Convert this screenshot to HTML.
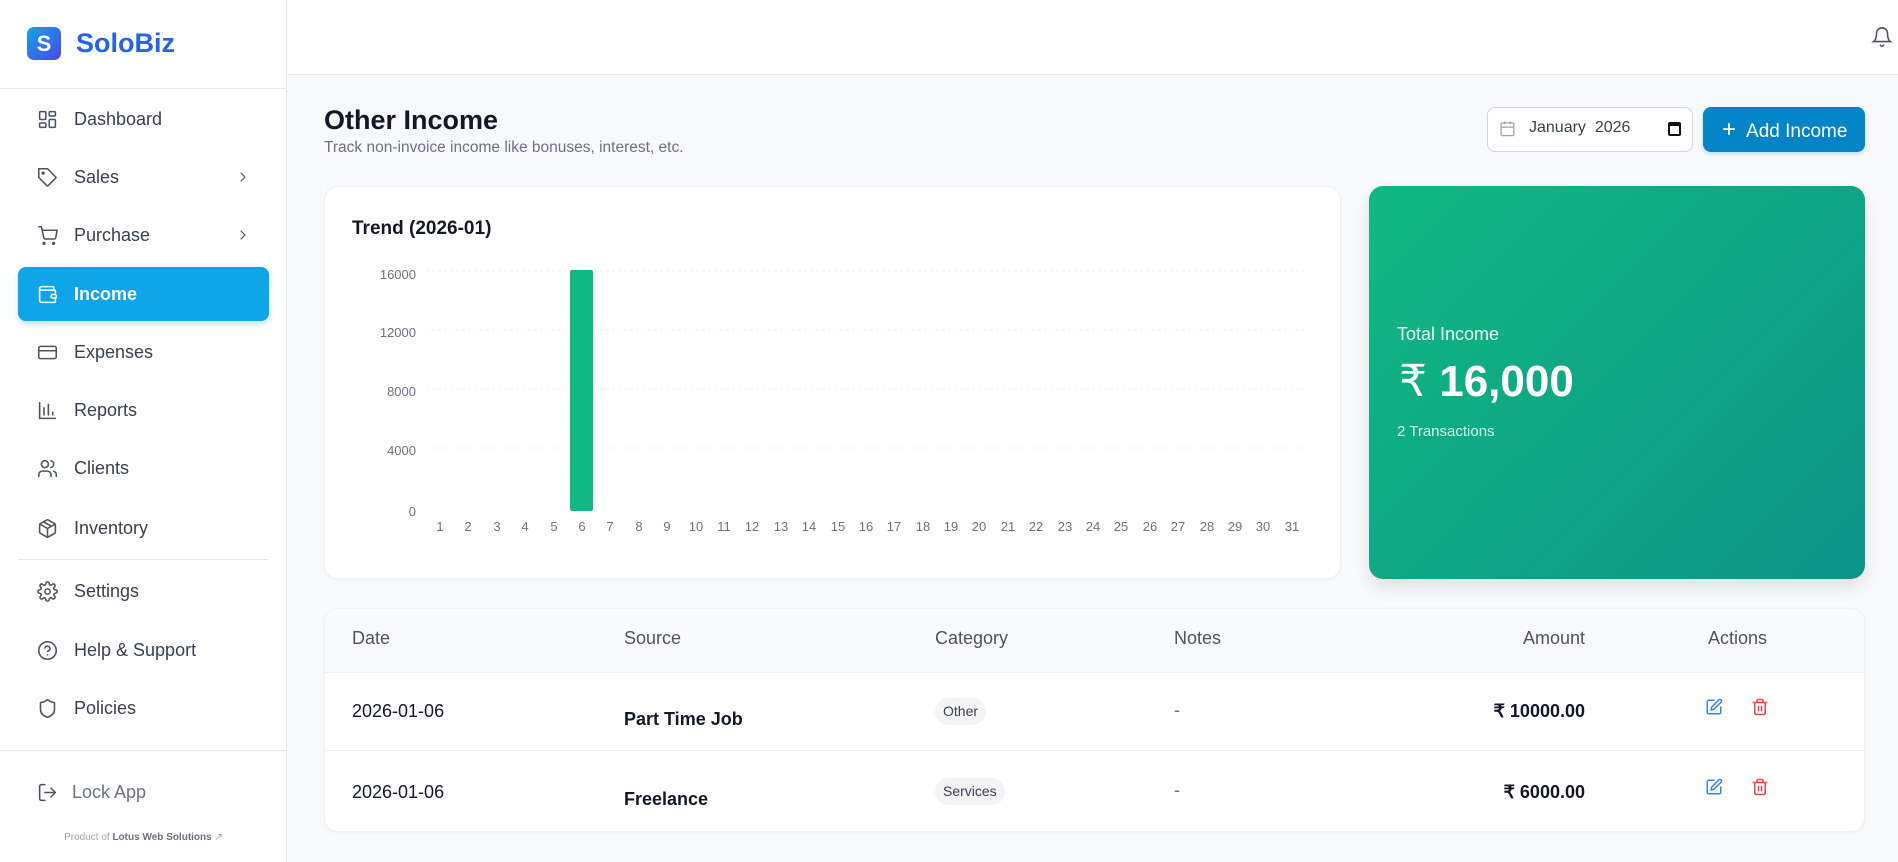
<!DOCTYPE html>
<html><head><meta charset="utf-8"><style>
*{box-sizing:border-box;margin:0;padding:0}
body{width:1898px;height:862px;overflow:hidden;background:#f8f9fb;font-family:"Liberation Sans",sans-serif;color:#111827;position:relative}
.a{position:absolute}
.side{left:0;top:0;width:287px;height:862px;background:#fff;border-right:1px solid #e5e7eb}
.nav{position:absolute;left:18px;width:251px;height:54px;display:flex;align-items:center;padding-left:19px;font-size:18px;color:#374151}
.nav svg{width:21px;height:21px;margin-right:16px;fill:none;stroke:#4b5563;stroke-width:1.8;stroke-linecap:round;stroke-linejoin:round}
.nav .chev{position:absolute;right:18px;width:16px;height:16px;margin:0}
.nav.act{background:#0ea5e9;color:#fff;font-weight:bold;border-radius:8px;box-shadow:0 3px 6px rgba(14,165,233,.3)}
.nav.act svg{stroke:#fff}
.hr{position:absolute;height:1px;background:#e5e7eb}
.card{background:#fff;border:1px solid #eef0f3;border-radius:14px;box-shadow:0 1px 3px rgba(0,0,0,.04)}
.th{position:absolute;top:628px;font-size:18px;color:#4b5563}
.td{position:absolute;font-size:18px;color:#111827}
.pill{position:absolute;background:#f3f4f6;border-radius:14px;font-size:14px;color:#374151;padding:0 8px;height:27px;line-height:27px}
</style></head><body>
<div class="a side"></div>
<div class="a" style="left:27px;top:27px;width:34px;height:33px;border-radius:7px;background:linear-gradient(135deg,#0ea5e9,#4f46e5);color:#fff;font-weight:bold;font-size:22px;text-align:center;line-height:33px">S</div>
<div class="a" style="left:76px;top:27px;font-size:27px;font-weight:bold;color:#2563eb;line-height:33px">SoloBiz</div>
<div class="hr" style="left:0;top:88px;width:287px"></div>

<div class="nav" style="top:92px"><svg viewBox="0 0 24 24"><rect x="3" y="3" width="7" height="9" rx="1"/><rect x="14" y="3" width="7" height="5" rx="1"/><rect x="14" y="12" width="7" height="9" rx="1"/><rect x="3" y="16" width="7" height="5" rx="1"/></svg>Dashboard</div>
<div class="nav" style="top:150px"><svg viewBox="0 0 24 24"><path d="M12 2H2v10l9.3 9.3a1 1 0 0 0 1.4 0l8.6-8.6a1 1 0 0 0 0-1.4z"/><circle cx="7" cy="7" r="1"/></svg>Sales<svg class="chev" viewBox="0 0 24 24"><path d="M9 6l6 6-6 6"/></svg></div>
<div class="nav" style="top:208px"><svg viewBox="0 0 24 24"><circle cx="8" cy="21" r="1"/><circle cx="19" cy="21" r="1"/><path d="M2 2h3l2.7 12.4a2 2 0 0 0 2 1.6h9.7a2 2 0 0 0 2-1.6L23 6H6"/></svg>Purchase<svg class="chev" viewBox="0 0 24 24"><path d="M9 6l6 6-6 6"/></svg></div>
<div class="nav act" style="top:267px"><svg viewBox="0 0 24 24"><path d="M19 7V4a1 1 0 0 0-1-1H5a2 2 0 0 0 0 4h15a1 1 0 0 1 1 1v4h-3a2 2 0 0 0 0 4h3a1 1 0 0 0 1-1v-2"/><path d="M3 5v14a2 2 0 0 0 2 2h15a1 1 0 0 0 1-1v-4"/></svg>Income</div>
<div class="nav" style="top:325px"><svg viewBox="0 0 24 24"><rect x="2" y="5" width="20" height="14" rx="2"/><path d="M2 10h20"/></svg>Expenses</div>
<div class="nav" style="top:383px"><svg viewBox="0 0 24 24"><path d="M3 3v18h18M8 17V9M13 17V5M18 17v-3"/></svg>Reports</div>
<div class="nav" style="top:441px"><svg viewBox="0 0 24 24"><path d="M16 21v-2a4 4 0 0 0-4-4H6a4 4 0 0 0-4 4v2"/><circle cx="9" cy="7" r="4"/><path d="M22 21v-2a4 4 0 0 0-3-3.9M16 3.1a4 4 0 0 1 0 7.8"/></svg>Clients</div>
<div class="nav" style="top:501px"><svg viewBox="0 0 24 24"><path d="M21 8a2 2 0 0 0-1-1.7l-7-4a2 2 0 0 0-2 0l-7 4A2 2 0 0 0 3 8v8a2 2 0 0 0 1 1.7l7 4a2 2 0 0 0 2 0l7-4a2 2 0 0 0 1-1.7z"/><path d="M3.3 7L12 12l8.7-5M12 22V12M7.5 4.3l9 5.2"/></svg>Inventory</div>
<div class="hr" style="left:18px;top:559px;width:251px"></div>
<div class="nav" style="top:564px"><svg viewBox="0 0 24 24"><circle cx="12" cy="12" r="3"/><path d="M19.4 15a1.7 1.7 0 0 0 .3 1.8l.1.1a2 2 0 1 1-2.8 2.8l-.1-.1a1.7 1.7 0 0 0-2.9 1.2V21a2 2 0 1 1-4 0v-.1a1.7 1.7 0 0 0-2.9-1.2l-.1.1a2 2 0 1 1-2.8-2.8l.1-.1A1.7 1.7 0 0 0 3 14H3a2 2 0 1 1 0-4h.1a1.7 1.7 0 0 0 1.2-2.9l-.1-.1A2 2 0 1 1 7 4.2l.1.1A1.7 1.7 0 0 0 10 3V3a2 2 0 1 1 4 0v.1a1.7 1.7 0 0 0 2.9 1.2l.1-.1a2 2 0 1 1 2.8 2.8l-.1.1A1.7 1.7 0 0 0 21 10h.1a2 2 0 1 1 0 4H21a1.7 1.7 0 0 0-1.6 1z"/></svg>Settings</div>
<div class="nav" style="top:623px"><svg viewBox="0 0 24 24"><circle cx="12" cy="12" r="10"/><path d="M9.1 9a3 3 0 0 1 5.8 1c0 2-3 3-3 3M12 17h.01"/></svg>Help &amp; Support</div>
<div class="nav" style="top:681px"><svg viewBox="0 0 24 24"><path d="M20 13c0 5-3.5 7.5-7.7 9a1 1 0 0 1-.7 0C7.5 20.5 4 18 4 13V6a1 1 0 0 1 1-1c2 0 4.5-1.2 6.2-2.7a1.2 1.2 0 0 1 1.5 0C14.5 3.8 17 5 19 5a1 1 0 0 1 1 1z"/></svg>Policies</div>
<div class="hr" style="left:0;top:750px;width:287px"></div>
<div class="nav" style="top:765px;color:#6b7280"><svg viewBox="0 0 24 24" style="margin-right:14px"><path d="M9 21H5a2 2 0 0 1-2-2V5a2 2 0 0 1 2-2h4M16 17l5-5-5-5M21 12H9"/></svg>Lock App</div>
<div class="a" style="left:0;width:287px;top:832px;text-align:center;font-size:10px;color:#9ca3af">Product of <b style="color:#6b7280">Lotus Web Solutions</b> ↗</div>

<div class="a" style="left:288px;top:0;width:1610px;height:75px;background:#fff;border-bottom:1px solid #e5e7eb"></div>
<svg class="a" style="left:1871px;top:25px" width="22" height="24" viewBox="0 0 24 24" fill="none" stroke="#4b5563" stroke-width="1.7" stroke-linecap="round"><path d="M6 8a6 6 0 0 1 12 0c0 7 3 9 3 9H3s3-2 3-9M10.3 21a1.9 1.9 0 0 0 3.4 0"/></svg>

<div class="a" style="left:324px;top:105px;font-size:27px;font-weight:bold;color:#111827">Other Income</div>
<div class="a" style="left:324px;top:139px;font-size:15.5px;color:#6b7280">Track non-invoice income like bonuses, interest, etc.</div>
<div class="a" style="left:1487px;top:107px;width:206px;height:45px;background:#fff;border:1px solid #d1d5db;border-radius:8px"></div>
<svg class="a" style="left:1499px;top:120px" width="17" height="17" viewBox="0 0 24 24" fill="none" stroke="#9ca3af" stroke-width="1.8"><rect x="3" y="4" width="18" height="18" rx="2"/><path d="M16 2v4M8 2v4M3 10h18"/></svg>
<div class="a" style="left:1529px;top:119px;font-size:16px;color:#374151">January&nbsp; 2026</div>
<div class="a" style="left:1668px;top:122px;width:13px;height:14px;border:2px solid #111;border-top-width:4px;border-radius:2px"></div>
<div class="a" style="left:1703px;top:107px;width:162px;height:45px;background:#0284c7;border-radius:8px;color:#fff;font-size:19px;line-height:45px;padding-left:19px;box-shadow:0 2px 4px rgba(2,132,199,.25)"><span style="font-size:24px;font-weight:300;margin-right:10px">+</span>Add Income</div>

<div class="a card" style="left:324px;top:186px;width:1017px;height:393px"></div>
<div class="a" style="left:352px;top:218px;font-size:19px;font-weight:bold">Trend (2026-01)</div>
<svg class="a" style="left:324px;top:186px" width="1017" height="393" font-family="Liberation Sans" font-size="13" fill="#6b7280">
<g stroke="#f0f0f0" stroke-dasharray="3 3">
<line x1="102" y1="85" x2="983" y2="85"/><line x1="102" y1="144" x2="983" y2="144"/><line x1="102" y1="203" x2="983" y2="203"/><line x1="102" y1="262" x2="983" y2="262"/>
</g>
<g text-anchor="end"><text x="92" y="93">16000</text><text x="92" y="151">12000</text><text x="92" y="210">8000</text><text x="92" y="269">4000</text><text x="92" y="330">0</text></g>
<rect x="246" y="84" width="23" height="241" rx="2" fill="#10b981"/>
<g text-anchor="middle">
<text x="116" y="345">1</text><text x="144" y="345">2</text><text x="173" y="345">3</text><text x="201" y="345">4</text><text x="230" y="345">5</text><text x="258" y="345">6</text><text x="286" y="345">7</text><text x="315" y="345">8</text><text x="343" y="345">9</text><text x="372" y="345">10</text><text x="400" y="345">11</text><text x="428" y="345">12</text><text x="457" y="345">13</text><text x="485" y="345">14</text><text x="514" y="345">15</text><text x="542" y="345">16</text><text x="570" y="345">17</text><text x="599" y="345">18</text><text x="627" y="345">19</text><text x="655" y="345">20</text><text x="684" y="345">21</text><text x="712" y="345">22</text><text x="741" y="345">23</text><text x="769" y="345">24</text><text x="797" y="345">25</text><text x="826" y="345">26</text><text x="854" y="345">27</text><text x="883" y="345">28</text><text x="911" y="345">29</text><text x="939" y="345">30</text><text x="968" y="345">31</text>
</g></svg>

<div class="a" style="left:1369px;top:186px;width:496px;height:393px;border-radius:14px;background:linear-gradient(135deg,#10b981,#0d9488);box-shadow:0 8px 16px rgba(0,0,0,.1)"></div>
<div class="a" style="left:1397px;top:324px;font-size:18px;color:#ecfdf5">Total Income</div>
<div class="a" style="left:1399px;top:356px;font-size:44px;font-weight:bold;color:#fff"><span style="font-weight:normal">₹</span> 16,000</div>
<div class="a" style="left:1397px;top:423px;font-size:15px;color:#d1fae5">2 Transactions</div>

<div class="a card" style="left:324px;top:608px;width:1541px;height:224px;overflow:hidden"><div style="height:64px;background:#f9fafb;border-bottom:1px solid #eef0f3"></div><div style="height:78px;border-bottom:1px solid #eef0f3"></div></div>
<div class="th" style="left:352px">Date</div>
<div class="th" style="left:624px">Source</div>
<div class="th" style="left:935px">Category</div>
<div class="th" style="left:1174px">Notes</div>
<div class="th" style="left:1400px;width:185px;text-align:right">Amount</div>
<div class="th" style="left:1708px">Actions</div>

<div class="td" style="left:352px;top:701px">2026-01-06</div>
<div class="td" style="left:624px;top:709px;font-weight:bold">Part Time Job</div>
<div class="pill" style="left:935px;top:698px">Other</div>
<div class="td" style="left:1174px;top:700px;color:#6b7280">-</div>
<div class="td" style="left:1400px;width:185px;text-align:right;top:701px;font-weight:bold">₹ 10000.00</div>
<div class="td" style="left:352px;top:782px">2026-01-06</div>
<div class="td" style="left:624px;top:789px;font-weight:bold">Freelance</div>
<div class="pill" style="left:935px;top:778px">Services</div>
<div class="td" style="left:1174px;top:780px;color:#6b7280">-</div>
<div class="td" style="left:1400px;width:185px;text-align:right;top:782px;font-weight:bold">₹ 6000.00</div>

<svg class="a" style="left:1705px;top:698px" width="18" height="18" viewBox="0 0 24 24" fill="none" stroke="#3b82f6" stroke-width="2" stroke-linecap="round" stroke-linejoin="round"><path d="M12 3H5a2 2 0 0 0-2 2v14a2 2 0 0 0 2 2h14a2 2 0 0 0 2-2v-7"/><path d="M18.4 2.6a2.1 2.1 0 0 1 3 3L12 15l-4 1 1-4z"/></svg>
<svg class="a" style="left:1751px;top:698px" width="18" height="18" viewBox="0 0 24 24" fill="none" stroke="#ef4444" stroke-width="2" stroke-linecap="round"><path d="M3 6h18M19 6v14a2 2 0 0 1-2 2H7a2 2 0 0 1-2-2V6M8 6V4a2 2 0 0 1 2-2h4a2 2 0 0 1 2 2v2M10 11v6M14 11v6"/></svg>
<svg class="a" style="left:1705px;top:778px" width="18" height="18" viewBox="0 0 24 24" fill="none" stroke="#3b82f6" stroke-width="2" stroke-linecap="round" stroke-linejoin="round"><path d="M12 3H5a2 2 0 0 0-2 2v14a2 2 0 0 0 2 2h14a2 2 0 0 0 2-2v-7"/><path d="M18.4 2.6a2.1 2.1 0 0 1 3 3L12 15l-4 1 1-4z"/></svg>
<svg class="a" style="left:1751px;top:778px" width="18" height="18" viewBox="0 0 24 24" fill="none" stroke="#ef4444" stroke-width="2" stroke-linecap="round"><path d="M3 6h18M19 6v14a2 2 0 0 1-2 2H7a2 2 0 0 1-2-2V6M8 6V4a2 2 0 0 1 2-2h4a2 2 0 0 1 2 2v2M10 11v6M14 11v6"/></svg>
</body></html>
